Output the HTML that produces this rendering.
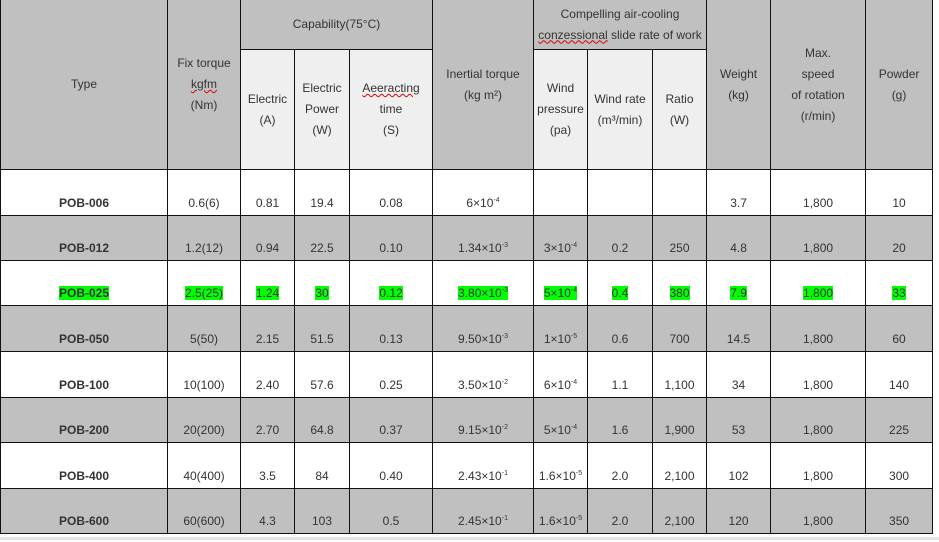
<!DOCTYPE html>
<html><head><meta charset="utf-8"><style>
html,body{margin:0;padding:0;background:#fff;width:939px;height:542px;overflow:hidden}
table{position:absolute;left:0;top:-1px;border-collapse:collapse;table-layout:fixed;width:933px;font-family:"Liberation Sans",Arial,sans-serif;font-size:12px;color:#333}
td{border:1px solid #111;text-align:center;padding:0;overflow:hidden;white-space:nowrap}
thead td{background:#c0c0c0;line-height:21px;vertical-align:middle}
thead td.l{background:#efefef}
tbody td{vertical-align:bottom;padding-bottom:5px;line-height:14px}
tbody tr.g td{background:#c0c0c0}
tbody tr.w td{background:#fff}
td.t{font-weight:bold}
.h span{background:#00ff00}
sup{font-size:7px;vertical-align:5px;line-height:0}
.u{text-decoration:underline wavy #d00;text-decoration-thickness:1px}
</style></head><body>
<table>
<colgroup><col style="width:167px"><col style="width:73px"><col style="width:54px"><col style="width:55px"><col style="width:83px"><col style="width:101px"><col style="width:54px"><col style="width:65px"><col style="width:54px"><col style="width:64px"><col style="width:95px"><col style="width:67px"></colgroup>
<thead>
<tr style="height:50px"><td rowspan="2">Type</td><td rowspan="2">Fix torque<br><span class="u">kgfm</span><br>(Nm)</td><td colspan="3" style="vertical-align:middle">Capability(75°C)</td><td rowspan="2">Inertial torque<br>(kg m²)</td><td colspan="3">Compelling air-cooling<br><span class="u">conzessional</span> slide rate of work</td><td rowspan="2">Weight<br>(kg)</td><td rowspan="2">Max.<br>speed<br>of rotation<br>(r/min)</td><td rowspan="2">Powder<br>(g)</td></tr>
<tr style="height:120px"><td class="l">Electric<br>(A)</td><td class="l">Electric<br>Power<br>(W)</td><td class="l"><span class="u">Aeeracting</span><br>time<br>(S)</td><td class="l">Wind<br>pressure<br>(pa)</td><td class="l">Wind rate<br>(m³/min)</td><td class="l">Ratio<br>(W)</td></tr>
</thead>
<tbody>
<tr class="w" style="height:46px"><td class="t">POB-006</td><td>0.6(6)</td><td>0.81</td><td>19.4</td><td>0.08</td><td>6×10<sup>-4</sup></td><td></td><td></td><td></td><td>3.7</td><td>1,800</td><td>10</td></tr>
<tr class="g" style="height:45px"><td class="t">POB-012</td><td>1.2(12)</td><td>0.94</td><td>22.5</td><td>0.10</td><td>1.34×10<sup>-3</sup></td><td>3×10<sup>-4</sup></td><td>0.2</td><td>250</td><td>4.8</td><td>1,800</td><td>20</td></tr>
<tr class="w h" style="height:45px"><td class="t"><span>POB-025</span></td><td><span>2.5(25)</span></td><td><span>1.24</span></td><td><span>30</span></td><td><span>0.12</span></td><td><span>3.80×10<sup>-3</sup></span></td><td><span>5×10<sup>-4</sup></span></td><td><span>0.4</span></td><td><span>380</span></td><td><span>7.9</span></td><td><span>1,800</span></td><td><span>33</span></td></tr>
<tr class="g" style="height:46px"><td class="t">POB-050</td><td>5(50)</td><td>2.15</td><td>51.5</td><td>0.13</td><td>9.50×10<sup>-3</sup></td><td>1×10<sup>-5</sup></td><td>0.6</td><td>700</td><td>14.5</td><td>1,800</td><td>60</td></tr>
<tr class="w" style="height:46px"><td class="t">POB-100</td><td>10(100)</td><td>2.40</td><td>57.6</td><td>0.25</td><td>3.50×10<sup>-2</sup></td><td>6×10<sup>-4</sup></td><td>1.1</td><td>1,100</td><td>34</td><td>1,800</td><td>140</td></tr>
<tr class="g" style="height:45px"><td class="t">POB-200</td><td>20(200)</td><td>2.70</td><td>64.8</td><td>0.37</td><td>9.15×10<sup>-2</sup></td><td>5×10<sup>-4</sup></td><td>1.6</td><td>1,900</td><td>53</td><td>1,800</td><td>225</td></tr>
<tr class="w" style="height:46px"><td class="t">POB-400</td><td>40(400)</td><td>3.5</td><td>84</td><td>0.40</td><td>2.43×10<sup>-1</sup></td><td>1.6×10<sup>-5</sup></td><td>2.0</td><td>2,100</td><td>102</td><td>1,800</td><td>300</td></tr>
<tr class="g" style="height:45px"><td class="t">POB-600</td><td>60(600)</td><td>4.3</td><td>103</td><td>0.5</td><td>2.45×10<sup>-1</sup></td><td>1.6×10<sup>-5</sup></td><td>2.0</td><td>2,100</td><td>120</td><td>1,800</td><td>350</td></tr>
</tbody>
</table>
<div style="position:absolute;left:0;top:537px;width:939px;height:3px;background:#e4e4e4"></div>
</body></html>
